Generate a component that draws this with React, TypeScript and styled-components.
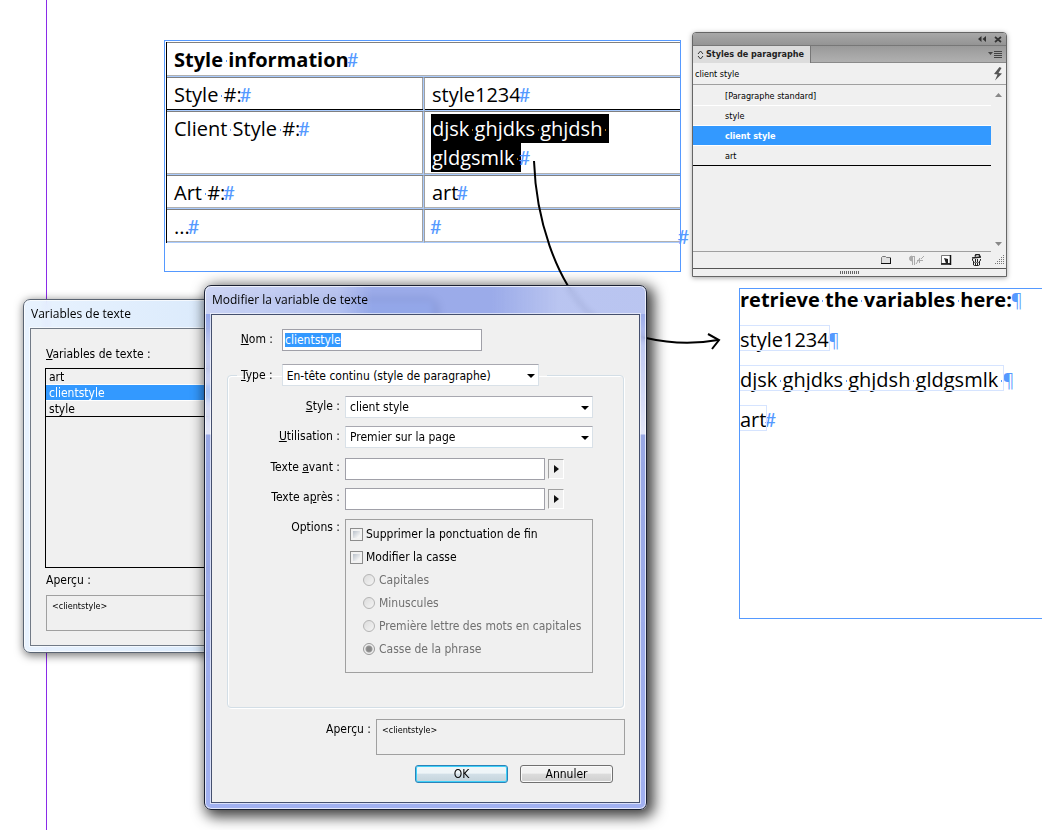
import React from "react";
import styled, { createGlobalStyle, css } from "styled-components";

const ui = `"DejaVu Sans Condensed", "Noto Sans", sans-serif`;
const titleFont = `"Open Sans", "Noto Sans", sans-serif`;
const doc = `"Open Sans", "Noto Sans", sans-serif`;
const blue = "#5599ff";
const select = "#3399ff";

const Global = createGlobalStyle`
  * { box-sizing: border-box; }
  body { margin: 0; background: #fff; color: #000; font: 12px/16px ${ui}; }
  button, input, select { font: inherit; color: inherit; margin: 0; }
`;

/* ---------- document canvas ---------- */

const Canvas = styled.main`
  position: relative;
  min-height: 100vh;
  overflow: hidden;
`;

const Guide = styled.div`
  position: absolute;
  top: 0;
  bottom: 0;
  left: 46px;
  width: 1px;
  background: #8a2be8;
`;

const TableFrame = styled.section`
  position: absolute;
  left: 164px;
  top: 40px;
  width: 517px;
  height: 232px;
  padding: 1px 0 0 1px;
  border: 1px solid ${blue};
  font: 20px/29px ${doc};
`;

const StyleTable = styled.table`
  width: 100%;
  border-collapse: separate;
  border-spacing: 0;
  table-layout: fixed;
  border-left: 1px solid #000;
`;

const NameColumn = styled.col`
  width: 257px;
`;

const TableRow = styled.tr<{ $dark?: boolean; $height?: number }>`
  & > * {
    height: ${(p) => p.$height ?? 34}px;
    padding: 2px 7px 1px;
    text-align: left;
    vertical-align: top;
    border-top: 1px solid #808080;
    border-bottom: 1px solid #aaccff;
    box-shadow: inset 0 -1px 0 ${(p) => (p.$dark ? "#000" : "#b0b0b0")};
  }
  & > :first-child:not([colspan]) {
    border-right: 1px solid #aaccff;
    box-shadow: inset 0 -1px 0 ${(p) => (p.$dark ? "#000" : "#b0b0b0")},
      inset -1px 0 0 #a0a0a0;
  }
  & > :nth-child(2) {
    border-left: 1px solid #a0a0a0;
  }
`;

const Head = styled.th`
  font-weight: 700;
`;
const Name = styled.th`
  font-weight: 400;
`;

const Selected = styled.span`
  display: inline-block;
  background: #000;
  color: #fff;
  padding: 0 1px;
  margin-left: -1px;
  vertical-align: top;
  height: 29px;
`;

const Mark = styled.span`
  margin-left: -2px;
  color: ${blue};
  font-family: Lato, sans-serif;
  font-weight: 400;
`;

const Pilcrow = styled.span`
  margin-left: -1px;
  color: ${blue};
  font-size: 18px;
  font-weight: 400;
`;

const Overset = styled(Mark)`
  position: absolute;
  right: -9px;
  bottom: 20px;
`;

const SpaceMark = styled.span<{ $color?: string }>`
  position: relative;
  white-space: pre;
  &::after {
    content: "";
    position: absolute;
    left: 50%;
    top: 50%;
    width: 1px;
    height: 2px;
    background: ${(p) => p.$color ?? blue};
  }
`;

function Words({ text, color }: { text: string; color?: string }) {
  const parts = text.split(" ");
  return (
    <>
      {parts.map((w, i) => (
        <React.Fragment key={i}>
          {i > 0 && <SpaceMark $color={color}> </SpaceMark>}
          {w}
        </React.Fragment>
      ))}
    </>
  );
}

const TextFrame = styled.section`
  position: absolute;
  left: 739px;
  right: 0;
  top: 288px;
  height: 331px;
  border: 1px solid ${blue};
  border-right: 0;
  font: 20px/29px ${doc};
  white-space: nowrap;
`;

const Lines = styled.div`
  display: grid;
  grid-auto-rows: 29px;
  row-gap: 11px;
  margin-top: -4px;
`;
const Line = styled.p<{ $bold?: boolean }>`
  margin: 0;
  font-weight: ${(p) => (p.$bold ? 700 : 400)};
`;
const Variable = styled.span`
  position: relative;
  &::before {
    content: "";
    position: absolute;
    left: 0;
    right: -1px;
    top: -1px;
    height: 24px;
    border: 1px solid #d6e4ff;
    border-left: 0;
  }
`;

const Curve = styled.svg`
  position: absolute;
  left: 520px;
  top: 150px;
  fill: none;
  stroke: #000;
  stroke-width: 2;
`;

/* ---------- paragraph styles panel ---------- */

const Panel = styled.aside`
  position: absolute;
  left: 692px;
  top: 32px;
  width: 315px;
  border: 1px solid #666;
  border-radius: 4px 4px 0 0;
  background: #f0f0f0;
  box-shadow: 0 1px 5px rgba(0, 0, 0, 0.35);
  font: 9px/12px ${ui};
`;
const PanelBar = styled.div`
  display: flex;
  justify-content: flex-end;
  align-items: center;
  gap: 8px;
  height: 13px;
  padding-right: 4px;
  border-radius: 3px 3px 0 0;
  border-bottom: 1px solid #777;
  background: linear-gradient(#a8a8a8, #949494);
`;
const IconButton = styled.button`
  display: grid;
  place-items: center;
  padding: 0;
  border: 0;
  background: none;
  svg { display: block; }
`;
const TabBar = styled.div`
  display: flex;
  justify-content: space-between;
  height: 17px;
  padding-right: 4px;
  border-bottom: 1px solid #8a8a8a;
  background: linear-gradient(#999, #b0b0b0);
`;
const Tab = styled.h2`
  display: flex;
  align-items: center;
  gap: 2px;
  width: 118px;
  height: 17px;
  margin: 0;
  padding-left: 4px;
  border-right: 1px solid #777;
  background: #dcdcdc;
  color: #222;
  font: 700 9px/17px ${ui};
  white-space: nowrap;
  svg { flex: none; }
`;
const Current = styled.div`
  display: flex;
  justify-content: space-between;
  align-items: center;
  height: 22px;
  padding: 0 3px 0 2px;
  border-bottom: 1px solid #a0a0a0;
`;
const PanelBody = styled.div`
  display: flex;
  height: 167px;
`;
const StyleList = styled.ul`
  flex: 1;
  margin: 0;
  padding: 1px 0 0;
  list-style: none;
  border-bottom: 1px solid #a0a0a0;
`;
const StyleItem = styled.li<{ $on?: boolean }>`
  height: 20px;
  padding-left: 32px;
  border-bottom: 1px solid #fff;
  line-height: 20px;
  ${(p) => p.$on && css`background: ${select}; color: #fff; font-weight: 700;`}
  &:last-child { border-color: #000; }
`;
const Scroll = styled.div`
  display: flex;
  flex-direction: column;
  justify-content: space-between;
  align-items: center;
  width: 15px;
  padding: 8px 0 6px;
`;
const PanelFoot = styled.div`
  display: flex;
  justify-content: flex-end;
  align-items: center;
  height: 17px;
  border-bottom: 1px solid #555;
`;
const Tools = styled.div`
  display: grid;
  grid-template-columns: repeat(4, 30px);
  justify-items: center;
  margin-right: 3px;
`;
const Grip = styled.div`
  display: grid;
  place-items: center;
  height: 7px;
`;

/* ---------- dialogs ---------- */

const Window = styled.section<{ $active?: boolean }>`
  position: absolute;
  display: flex;
  flex-direction: column;
  padding: 0 6px 6px;
  border: 1px solid ${(p) => (p.$active ? "#1b2133" : "#5a6472")};
  border-radius: 7px;
  backdrop-filter: blur(3px);
  background: ${(p) =>
    p.$active
      ? `linear-gradient(90deg, rgba(255,255,255,.5), rgba(255,255,255,.3) 30%, rgba(255,255,255,0) 38%, rgba(255,255,255,0) 65%, rgba(255,255,255,.3) 80%) 0 0 / 100% 28px no-repeat,
         linear-gradient(rgba(130,150,228,.8) 0, rgba(130,150,228,.8) 28px, rgba(176,188,238,.8) 60px, rgba(222,226,248,.85) 148px, rgba(146,162,226,.94) 149px, rgba(158,174,240,.97) 100%)`
      : `linear-gradient(90deg, rgba(228,240,254,.85), rgba(208,228,250,.85) 60%)`};
  box-shadow: inset 0 0 0 1px rgba(255, 255, 255, 0.7),
    ${(p) =>
      p.$active
        ? "4px 4px 14px 3px rgba(0,0,0,.75)"
        : "1px 2px 9px 1px rgba(0,0,0,.5)"};
`;
const VariablesWindow = styled(Window)`
  left: 23px;
  top: 299px;
  width: 412px;
  height: 354px;
`;
const EditWindow = styled(Window)`
  left: 204px;
  top: 285px;
  width: 443px;
  height: 525px;
`;
const Title = styled.h1`
  height: 28px;
  margin: 0;
  padding-left: 1px;
  font: 12px/28px ${titleFont};
`;
const Pane = styled.div<{ $active?: boolean }>`
  flex: 1;
  border: 1px solid ${(p) => (p.$active ? "#45506e" : "#717a86")};
  box-shadow: 0 0 0 1px rgba(255, 255, 255, 0.6);
  background: #f0f0f0;
`;
const VariablesPane = styled(Pane)`
  display: flex;
  flex-direction: column;
  padding: 16px 14px 14px;
`;
const Caption = styled.label`
  padding-left: 1px;
  line-height: 18px;
`;
const ListBox = styled.ul`
  height: 200px;
  margin: 5px 0 3px;
  padding: 0;
  list-style: none;
  border: 1px solid #000;
`;
const ListItem = styled.li<{ $on?: boolean }>`
  height: 16px;
  padding-left: 3px;
  border-bottom: 1px solid #fff;
  line-height: 16px;
  ${(p) => p.$on && css`background: ${select}; color: #fff;`}
  &:last-child { border-color: #000; }
`;
const Preview = styled.output`
  display: block;
  height: 36px;
  padding: 4px 5px;
  border: 1px solid #a0a0a0;
  font: 9px/12px ${ui};
`;
const VariablesPreview = styled(Preview)`
  margin: 6px 0 0 1px;
`;

const Form = styled(Pane).attrs({ as: "form" })`
  display: flex;
  flex-direction: column;
  padding: 14px 15px 0;
`;
const Row = styled.div<{ $label: number; $gap?: number; $drop?: boolean }>`
  display: grid;
  grid-template-columns: ${(p) => p.$label}px auto 1fr;
  column-gap: ${(p) => p.$gap ?? 5}px;
  align-items: start;
  justify-items: start;
  ${(p) => p.$drop && css`padding-top: 2px;`}
  & > label, & > span:first-child {
    justify-self: end;
    margin-top: ${(p) => (p.$drop ? -1 : 0)}px;
    line-height: 20px;
    white-space: nowrap;
  }
`;
const Group = styled.fieldset`
  min-width: 0;
  height: 344px;
  margin: 13px 0 0;
  padding: 10px 0 0;
  border: 1px solid #d3dee6;
  border-radius: 4px;
  box-shadow: inset 1px 1px 0 #fff, 1px 1px 0 #fff;
`;
const Legend = styled.legend`
  display: flex;
  gap: 9px;
  margin-left: 9px;
  padding: 0 8px 0 4px;
  line-height: 22px;
`;
const Rows = styled.div`
  display: grid;
  grid-auto-rows: 22px;
  row-gap: 8px;
`;
const TextBox = styled.input`
  width: 200px;
  height: 22px;
  padding: 0 2px;
  border: 1px solid #a0a0a8;
  background: #fff;
  outline: 0;
  &::selection { background: ${select}; color: #fff; }
`;
const SelectWrap = styled.span<{ $width: number }>`
  position: relative;
  display: block;
  width: ${(p) => p.$width}px;
  &::after {
    content: "";
    position: absolute;
    right: 4px;
    top: 10px;
    border: 4px solid transparent;
    border-top-color: #000;
    border-bottom: 0;
  }
  select {
    display: block;
    appearance: none;
    width: 100%;
    height: 22px;
    padding: 0 4px;
    border: 1px solid #d9e1e8;
    border-top-color: #a8a8b0;
    border-radius: 0;
    background: #fff;
  }
`;
const MoreButton = styled.button`
  width: 16px;
  height: 20px;
  margin: 1px 0 0 -2px;
  padding: 0 0 0 5px;
  border: 1px solid #fff;
  border-top-color: #a0a0a0;
  border-left-color: #a0a0a0;
  background: #f0f0f0;
  &::after {
    content: "";
    display: block;
    width: 0;
    border: 4px solid transparent;
    border-left: 5px solid #111;
    border-right: 0;
  }
`;
const Options = styled.div`
  display: flex;
  flex-direction: column;
  gap: 1px;
  width: 248px;
  height: 154px;
  margin-top: 1px;
  padding: 3px 4px;
  border: 1px solid #a0a0a0;
`;
const Choice = styled.label<{ $sub?: boolean }>`
  display: flex;
  align-items: center;
  gap: ${(p) => (p.$sub ? 4 : 3)}px;
  height: 22px;
  padding-left: ${(p) => (p.$sub ? 13 : 0)}px;
  color: ${(p) => (p.$sub ? "#707070" : "#000")};
  white-space: nowrap;
`;
const Check = styled.input`
  appearance: none;
  width: 13px;
  height: 13px;
  border: 1px solid #8c8c8c;
  background: linear-gradient(135deg, #b8c0ca, #f4f4f4 80%) content-box, #f2f2f2;
  padding: 2px;
`;
const Radio = styled.input`
  appearance: none;
  width: 12px;
  height: 12px;
  border: 1px solid #b4b4b4;
  border-radius: 50%;
  background: linear-gradient(135deg, #dcdcdc, #f4f4f4);
  &:checked {
    border-color: #999;
    background: radial-gradient(circle, #888 0 2px, #999 3px, #eee 4px);
  }
`;
const PreviewRow = styled(Row)`
  margin-top: 11px;
  & > output { width: 249px; }
`;
const Actions = styled.div`
  display: flex;
  justify-content: flex-end;
  gap: 12px;
  padding: 10px 11px 0 0;
`;
const Push = styled.button<{ $default?: boolean }>`
  width: 93px;
  height: 18px;
  padding: 0;
  border: 1px solid ${(p) => (p.$default ? "#2c83b8" : "#707070")};
  border-radius: 3px;
  background: ${(p) =>
    p.$default
      ? "linear-gradient(#eef5f8 45%, #d2e0e8 50%, #c4d4dc)"
      : "linear-gradient(#f2f2f2 45%, #dcdcdc 50%, #cfcfcf)"};
  box-shadow: inset 0 0 0 1px ${(p) => (p.$default ? "#3fd0f8" : "#fafafa")};
  line-height: 16px;
`;

export default function App() {
  return (
    <>
      <Global />
      <Canvas>
        <Guide />

        <TableFrame>
          <StyleTable>
            <colgroup><NameColumn /><col /></colgroup>
            <tbody>
              <TableRow $height={35}><Head colSpan={2}><Words text="Style information" /><Mark>#</Mark></Head></TableRow>
              <TableRow $dark>
                <Name scope="row"><Words text="Style #:" /><Mark>#</Mark></Name>
                <td>style1234<Mark>#</Mark></td>
              </TableRow>
              <TableRow $height={64}>
                <Name scope="row"><Words text="Client Style #:" /><Mark>#</Mark></Name>
                <td>
                  <Selected><Words text="djsk ghjdks ghjdsh " color="#b87418" /></Selected><br />
                  <Selected><Words text="gldgsmlk " color="#b87418" /></Selected><Mark>#</Mark>
                </td>
              </TableRow>
              <TableRow>
                <Name scope="row"><Words text="Art #:" /><Mark>#</Mark></Name>
                <td>art<Mark>#</Mark></td>
              </TableRow>
              <TableRow>
                <Name scope="row">...<Mark>#</Mark></Name>
                <td><Mark>#</Mark></td>
              </TableRow>
            </tbody>
          </StyleTable>
          <Overset>#</Overset>
        </TableFrame>

        <TextFrame>
          <Lines>
            <Line $bold><Words text="retrieve the variables here:" /><Pilcrow>¶</Pilcrow></Line>
            <Line><Variable>style1234</Variable><Pilcrow>¶</Pilcrow></Line>
            <Line><Variable><Words text="djsk ghjdks ghjdsh gldgsmlk " /></Variable><Pilcrow>¶</Pilcrow></Line>
            <Line><Variable>art</Variable><Mark>#</Mark></Line>
          </Lines>
        </TextFrame>

        <Curve width="210" height="210" viewBox="0 0 210 210" aria-hidden="true">
          <path d="M14 11C16 70 36 128 66 160C92 182 112 186 126 188C152 194 176 194 198 190" />
          <path d="M188 184L199 190L192 199" />
        </Curve>

        <Panel>
          <PanelBar>
            <IconButton aria-label="Réduire">
              <svg width="8" height="6" fill="#333"><path d="M3.500 0v6L0 3zM8 0v6L4.500 3z" /></svg>
            </IconButton>
            <IconButton aria-label="Fermer">
              <svg width="8" height="7" stroke="#333" strokeWidth="1.700"><path d="M1 1l6 5M7 1L1 6" /></svg>
            </IconButton>
          </PanelBar>
          <TabBar>
            <Tab>
              <svg width="7" height="10" fill="none" stroke="#333"><path d="M1 4l2.500-3L6 4M1 6l2.500 3L6 6" /></svg>
              Styles de paragraphe
            </Tab>
            <IconButton aria-label="Menu du panneau">
              <svg width="14" height="9" stroke="#444"><path d="M0 2h5L2.500 5z" fill="#444" stroke="none" /><path d="M6 1.500h8M6 3.500h8M6 5.500h8M6 7.500h8" /></svg>
            </IconButton>
          </TabBar>
          <Current>
            client style
            <IconButton aria-label="Effacer les remplacements">
              <svg width="10" height="14" fill="#555"><path d="M6.500 0L1 7l3.500 0.500L2 13.500 9 6.500 5.500 6 8.500 1z" /></svg>
            </IconButton>
          </Current>
          <PanelBody>
            <StyleList>
              <StyleItem>[Paragraphe standard]</StyleItem>
              <StyleItem>style</StyleItem>
              <StyleItem $on>client style</StyleItem>
              <StyleItem>art</StyleItem>
            </StyleList>
            <Scroll>
              <svg width="7" height="4" fill="#888"><path d="M0 4h7L3.500 0z" /></svg>
              <svg width="7" height="4" fill="#888"><path d="M0 0h7L3.500 4z" /></svg>
            </Scroll>
          </PanelBody>
          <PanelFoot>
            <Tools>
              <IconButton aria-label="Nouveau groupe">
                <svg width="12" height="10"><path d="M1.500 8.500v-6l1-1h3l1 1h4v6z" fill="#e0e0e0" stroke="#777" /><path d="M1 8.500h10M10.500 3v6" stroke="#111" /></svg>
              </IconButton>
              <IconButton aria-label="Effacer">
                <svg width="18" height="11" stroke="#aaa" fill="none"><path d="M5.500 1v9M7.500 1v9M4 1.500h4" /><path d="M5 1a2 2 0 0 0 0 5z" fill="#aaa" /><path d="M9 9l4-6M10 5.500h6M12.500 3v5M14 4l3-3" /></svg>
              </IconButton>
              <IconButton aria-label="Nouveau style">
                <svg width="11" height="10"><path d="M.5.5h9v8h-9z" fill="#fff" stroke="#777" /><path d="M9.500 0v10M0 9h10" stroke="#111" strokeWidth="1.500" /><path d="M3 3l4 1v4.500H5z" fill="#222" /></svg>
              </IconButton>
              <IconButton aria-label="Supprimer">
                <svg width="11" height="12" fill="none" stroke="#222"><path d="M1 4l9-1M4 2.500l1-2h3l1 2" strokeWidth="1.500" /><path d="M1.500 5v1.500l1 .5v4l1 .5h4l1-.5V7l1-.5V5M4.500 5v6M6.500 5v6" /><path d="M3 8.500h5" stroke="#777" /></svg>
              </IconButton>
            </Tools>
            <svg width="12" height="12" fill="#777">
              <path d="M9 1h1v1H9zM7 3h1v1H7zM9 3h1v1H9zM5 5h1v1H5zM7 5h1v1H7zM9 5h1v1H9zM3 7h1v1H3zM5 7h1v1H5zM7 7h1v1H7zM9 7h1v1H9zM1 9h1v1H1zM3 9h1v1H3zM5 9h1v1H5zM7 9h1v1H7zM9 9h1v1H9z" />
            </svg>
          </PanelFoot>
          <Grip>
            <svg width="20" height="3" stroke="#666" strokeDasharray="1 1" strokeWidth="3"><path d="M0 1.500h20" /></svg>
          </Grip>
        </Panel>

        <VariablesWindow>
          <Title>Variables de texte</Title>
          <VariablesPane>
            <Caption as="span"><u>V</u>ariables de texte :</Caption>
            <ListBox>
              <ListItem>art</ListItem>
              <ListItem $on>clientstyle</ListItem>
              <ListItem>style</ListItem>
            </ListBox>
            <Caption htmlFor="list-preview">Aperçu :</Caption>
            <VariablesPreview id="list-preview">&lt;clientstyle&gt;</VariablesPreview>
          </VariablesPane>
        </VariablesWindow>

        <EditWindow $active>
          <Title>Modifier la variable de texte</Title>
          <Form $active>
            <Row $label={46} $gap={9}>
              <label htmlFor="nom"><u>N</u>om :</label>
              <TextBox id="nom" defaultValue="clientstyle" autoFocus onFocus={(e) => e.currentTarget.select()} />
            </Row>
            <Group>
              <Legend>
                <label htmlFor="type"><u>T</u>ype :</label>
                <SelectWrap $width={257}>
                  <select id="type"><option>En-tête continu (style de paragraphe)</option></select>
                </SelectWrap>
              </Legend>
              <Rows>
                <Row $label={112}>
                  <label htmlFor="style"><u>S</u>tyle :</label>
                  <SelectWrap $width={248}><select id="style"><option>client style</option></select></SelectWrap>
                </Row>
                <Row $label={112}>
                  <label htmlFor="use"><u>U</u>tilisation :</label>
                  <SelectWrap $width={248}><select id="use"><option>Premier sur la page</option></select></SelectWrap>
                </Row>
                <Row $label={112} $drop>
                  <label htmlFor="before">Texte <u>a</u>vant :</label>
                  <TextBox id="before" />
                  <MoreButton type="button" aria-label="Insérer avant" />
                </Row>
                <Row $label={112} $drop>
                  <label htmlFor="after">Texte a<u>p</u>rès :</label>
                  <TextBox id="after" />
                  <MoreButton type="button" aria-label="Insérer après" />
                </Row>
                <Row $label={112} $drop>
                  <span>Options :</span>
                  <Options>
                    <Choice><Check type="checkbox" />Supprimer la ponctuation de fin</Choice>
                    <Choice><Check type="checkbox" />Modifier la casse</Choice>
                    <Choice $sub><Radio type="radio" name="case" disabled />Capitales</Choice>
                    <Choice $sub><Radio type="radio" name="case" disabled />Minuscules</Choice>
                    <Choice $sub><Radio type="radio" name="case" disabled />Première lettre des mots en capitales</Choice>
                    <Choice $sub><Radio type="radio" name="case" disabled defaultChecked />Casse de la phrase</Choice>
                  </Options>
                </Row>
              </Rows>
            </Group>
            <PreviewRow $label={144}>
              <label htmlFor="preview">Aperçu :</label>
              <Preview id="preview">&lt;clientstyle&gt;</Preview>
            </PreviewRow>
            <Actions>
              <Push type="button" $default>OK</Push>
              <Push type="button">Annuler</Push>
            </Actions>
          </Form>
        </EditWindow>
      </Canvas>
    </>
  );
}
